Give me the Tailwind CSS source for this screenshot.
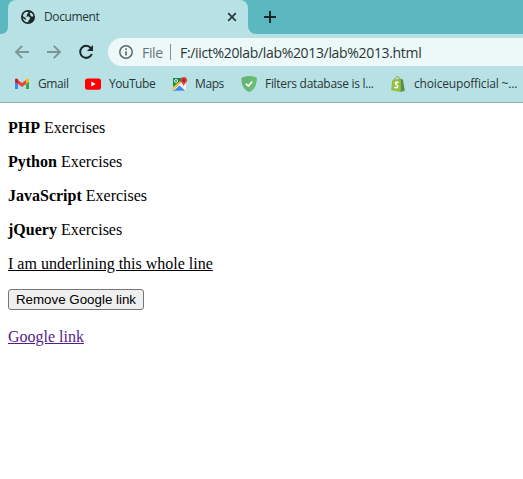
<!DOCTYPE html>
<html lang="en">
<head>
<meta charset="utf-8">
<title>Document</title>
<script src="https://cdn.jsdelivr.net/npm/@tailwindcss/browser@4"></script>
</head>
<body class="w-[523px] h-[479px] overflow-hidden bg-white text-black">
<header class="h-[103px] bg-[#b8e1e5] border-b border-[#91afb2] font-['Open_Sans',sans-serif] text-[12px] text-[#293638] whitespace-nowrap">
  <div class="flex h-[34px] bg-[#b8e1e5]">
    <div class="w-2 bg-[#b8e1e5]"><div class="h-full bg-[#5bb8c1] rounded-br-[7px]"></div></div>
    <div class="w-[240px] bg-[#5bb8c1]">
      <div class="flex items-center h-full bg-[#b8e1e5] rounded-t-[8px] pl-3">
        <svg class="w-4 h-4 shrink-0" viewBox="0 0 16 16"><circle cx="8" cy="8" r="7" fill="#1e2526"/><path d="M2.8 7.2C3 5.6 4.1 3.9 5.8 3.1L8.3 3v1.2L7 5v1.4L5.7 7.6h3.1l1.3 1.1v1.6l-1.3.5-.6 2.5c-3 .2-5.1-2-5.4-4.5l2.3 2 .8-.2-.2-1.7zM10.8 3.6c1.5.8 2.4 2.1 2.6 3.7l-1.5.4-1.5-1V5.5l-1-.5z" fill="#b8e1e5"/></svg>
        <span class="w-[183px] ml-2 tracking-[-0.4px]">Document</span>
        <svg class="w-[10px] h-[10px] shrink-0" viewBox="0 0 10 10"><path d="M1.2 1.2l7.6 7.6M8.8 1.2L1.2 8.8" stroke="#27383a" stroke-width="1.7"/></svg>
      </div>
    </div>
    <div class="flex flex-1 items-center bg-[#5bb8c1] rounded-bl-[8px] pl-4">
      <svg class="w-3 h-3" viewBox="0 0 12 12"><path d="M6 0v12M0 6h12" stroke="#1b2728" stroke-width="2"/></svg>
    </div>
  </div>
  <div class="flex items-center h-[36px] pl-[14px]">
    <svg class="w-4 h-4 shrink-0" viewBox="0 0 16 16" fill="none" stroke="#7d9495" stroke-width="1.9"><path d="M15 8H2.5M8.2 1.8L2 8l6.2 6.2"/></svg>
    <svg class="w-4 h-4 ml-4 shrink-0" viewBox="0 0 16 16" fill="none" stroke="#7d9495" stroke-width="1.9"><path d="M1 8h12.5M7.8 1.8L14 8l-6.2 6.2"/></svg>
    <svg class="w-4 h-4 ml-4 shrink-0" viewBox="0 0 16 16"><path d="M12.8 4A6 6 0 1 0 13.8 10" fill="none" stroke="#1d292a" stroke-width="2"/><path d="M15 1v6H9z" fill="#1d292a"/></svg>
    <div class="flex items-center flex-1 h-7 ml-[14px] pl-[11px] bg-[#edf8f9] rounded-l-full text-[14px]">
      <svg class="w-[14px] h-[14px] shrink-0" viewBox="0 0 14 14"><circle cx="7" cy="7" r="6.2" fill="none" stroke="#5d686a" stroke-width="1.5"/><path d="M7 6.2v4.3M7 3.3v1.6" stroke="#5d686a" stroke-width="1.6"/></svg>
      <span class="w-[28px] ml-[9px] text-[#667678] tracking-[-0.35px]">File</span>
      <i class="w-px h-4 bg-[#839193]"></i>
      <span class="ml-[9px] tracking-[-0.33px]">F:/iict%20lab/lab%2013/lab%2013.html</span>
    </div>
  </div>
  <nav class="flex items-center h-[28px] pl-[14px]">
    <svg class="w-4 h-4 shrink-0" viewBox="0 0 16 16"><path d="M1 4v9h3V7z" fill="#4285f4"/><path d="M12 7v6h3V4z" fill="#34a853"/><path d="M12 4v4l3-2.2V4c0-1.7-1.4-2-3-.8z" fill="#fbbc04"/><path d="M4 4v4l4 3 4-3V4L8 7z" fill="#ea4335"/><path d="M1 4v1.8L4 8V3.2C2.4 2 1 2.3 1 4z" fill="#c5221f"/></svg>
    <span class="w-[47px] ml-2 tracking-[-0.4px]">Gmail</span>
    <svg class="w-4 h-4 shrink-0" viewBox="0 0 16 16"><rect y="2.5" width="16" height="11.3" rx="2.5" fill="#f00"/><path d="M6.3 5.6v5L10.7 8z" fill="#fff"/></svg>
    <span class="w-[63px] ml-2 tracking-[-0.45px]">YouTube</span>
    <svg class="w-4 h-4 shrink-0" viewBox="0 0 16 16"><path d="M1 2h12v12.5H1z" fill="#168c50"/><path d="M1 14L9 6l5 1v7.5z" fill="#f1f3f4"/><path d="M1 11l7-6 1 2-8 7z" fill="#fbc22d"/><path d="M2 14.5l5.5-5 5.5 5z" fill="#4285f4"/><circle cx="4" cy="5" r="1.5" fill="none" stroke="#fff" stroke-width=".9"/><path d="M11.8 1C9.8 1 8.5 2.4 8.5 4.2c0 2.2 2.7 3.1 3.2 6 .7-2.9 3.4-3.8 3.4-6C15.1 2.4 13.8 1 11.8 1z" fill="#e23e34"/><circle cx="11.8" cy="4.3" r="1.2" fill="#8c2423"/></svg>
    <span class="w-[46px] ml-[7px] tracking-[-0.4px]">Maps</span>
    <svg class="w-4 h-4 shrink-0" viewBox="0 0 16 16"><path d="M8 0c2.5.1 5 .7 7.5 1.8C16 8.5 13.2 14 8 16 2.8 14 0 8.5.5 1.8 3 .7 5.5.1 8 0z" fill="#67b573"/><path d="M8 0c2.5.1 5 .7 7.5 1.8C16 8.5 13.2 14 8 16z" fill="#68bd70"/><path d="M4.8 7.6l2.5 2.5 4-4.6" fill="none" stroke="#fff" stroke-width="1.6"/></svg>
    <span class="w-[125px] ml-2 tracking-[-0.3px]">Filters database is l...</span>
    <svg class="w-4 h-4 shrink-0" viewBox="0 0 16 16"><path d="M2.3 4l8.2-1.5V16L1 14.2z" fill="#95bf47"/><path d="M10.5 2.5l2.5 1.3 1.8 10.9-4.3 1.3z" fill="#5e8e3e"/><path d="M4.5 4.2C5 1.7 6.3.5 7.6.6 9 .7 9.5 2.3 9.5 3.3" fill="none" stroke="#86ae40"/><path d="M8.5 6.700c-1.4-.8-3-.5-3 .6 0 1.5 2.4 1.5 2.2 3.3-.2 1.5-1.9 1.5-3.2.6" fill="none" stroke="#fff" stroke-width="1.5"/></svg>
    <span class="ml-2 tracking-[-0.17px]">choiceupofficial ~...</span>
  </nav>
</header>
<main class="flex flex-col items-start gap-4 p-2 pt-4 font-['Liberation_Serif',serif] text-[16px] leading-[18px]">
  <p><b>PHP</b> Exercises</p>
  <p><b>Python</b> Exercises</p>
  <p><b>JavaScript</b> Exercises</p>
  <p><b>jQuery</b> Exercises</p>
  <p class="underline">I am underlining this whole line</p>
  <button class="w-[136px] h-[21px] bg-[#efefef] border border-[#767676] rounded-[3px] font-['Liberation_Sans',sans-serif] text-[13.333px] leading-[15px] whitespace-nowrap">Remove Google link</button>
  <a href="#" class="mt-[2px] underline text-[#551a8b]">Google link</a>
</main>
</body>
</html>
